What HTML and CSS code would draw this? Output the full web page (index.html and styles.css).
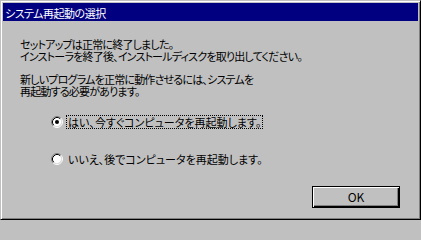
FILE: index.html
```html
<!DOCTYPE html>
<html lang="ja">
<head>
<meta charset="utf-8">
<title>システム再起動の選択</title>
<link rel="stylesheet" href="styles.css">
</head>
<body>
<div class="window">
  <div class="titlebar"><span class="title">システム再起動の選択</span></div>
  <div class="content">
    <p class="msg">セットアップは正常に終了しました。<br>インストーラを終了後、インストールディスクを取り出してください。</p>
    <p class="msg msg-gap">新しいプログラムを正常に動作させるには、システムを<br>再起動する必要があります。</p>
    <div class="options">
      <div class="radio radio-first">
        <svg class="radio-icon" width="12" height="12" viewBox="0 0 12 12">
          <circle cx="6" cy="6" r="4.5" fill="#fff"/>
          <path d="M2.11 9.89 A5.5 5.5 0 0 1 9.89 2.11" fill="none" stroke="#808080" stroke-width="1"/>
          <path d="M9.89 2.11 A5.5 5.5 0 0 1 2.11 9.89" fill="none" stroke="#fff" stroke-width="1"/>
          <path d="M2.82 9.18 A4.5 4.5 0 0 1 9.18 2.82" fill="none" stroke="#000" stroke-width="1"/>
          <path d="M9.18 2.82 A4.5 4.5 0 0 1 2.82 9.18" fill="none" stroke="#dfdfdf" stroke-width="1"/>
          <circle cx="6" cy="6" r="2" fill="#000"/>
        </svg>
        <span class="label focus">はい、今すぐコンピュータを再起動します。</span>
      </div>
      <div class="radio radio-second">
        <svg class="radio-icon" width="12" height="12" viewBox="0 0 12 12">
          <circle cx="6" cy="6" r="4.5" fill="#fff"/>
          <path d="M2.11 9.89 A5.5 5.5 0 0 1 9.89 2.11" fill="none" stroke="#808080" stroke-width="1"/>
          <path d="M9.89 2.11 A5.5 5.5 0 0 1 2.11 9.89" fill="none" stroke="#fff" stroke-width="1"/>
          <path d="M2.82 9.18 A4.5 4.5 0 0 1 9.18 2.82" fill="none" stroke="#000" stroke-width="1"/>
          <path d="M9.18 2.82 A4.5 4.5 0 0 1 2.82 9.18" fill="none" stroke="#dfdfdf" stroke-width="1"/>
        </svg>
        <span class="label">いいえ、後でコンピュータを再起動します。</span>
      </div>
    </div>
    <div class="actions">
      <button class="btn btn-default" type="button">OK</button>
    </div>
  </div>
</div>
</body>
</html>
```

FILE: styles.css
```css
html, body {
  margin: 0;
  padding: 0;
  background: #c0c0c0;
}

body {
  font-family: "Noto Sans CJK JP", "Noto Sans", sans-serif;
  font-size: 11px;
  font-feature-settings: "palt";
  color: #000;
}

.window {
  box-sizing: border-box;
  width: 421px;
  height: 220px;
  display: flex;
  flex-direction: column;
  background: #c0c0c0;
  border-style: solid;
  border-width: 1px;
  border-color: #c0c0c0 #000 #000 #c0c0c0;
  box-shadow: inset 1px 1px #fff, inset -1px -1px #808080;
  padding: 2px;
}

.titlebar {
  height: 18px;
  background: #000080;
  color: #fff;
  display: flex;
  align-items: center;
  padding-left: 2px;
  padding-top: 1px;
  box-sizing: border-box;
}

.title {
  line-height: 12px;
  letter-spacing: -0.5px;
}

.content {
  flex: 1;
  display: flex;
  flex-direction: column;
  padding: 17px 18px 9px 17px;
}

.msg {
  margin: 0;
  line-height: 12px;
  white-space: nowrap;
  letter-spacing: -0.8px;
}

.msg-gap {
  margin-top: 11px;
}

.options {
  display: flex;
  flex-direction: column;
  margin-left: 31px;
  margin-top: 18px;
}

.radio {
  display: flex;
  align-items: center;
  gap: 3px;
  height: 14px;
}

.radio-second {
  margin-top: 23px;
}

.radio-icon {
  display: block;
  flex: none;
}

.label {
  border: 1px solid transparent;
  padding: 0 1px;
  line-height: 12px;
  white-space: nowrap;
}

.label.focus {
  border: 1px dotted #000;
}

.actions {
  margin-top: auto;
  display: flex;
  justify-content: flex-end;
}

.btn {
  width: 88px;
  height: 22px;
  margin: 0;
  padding: 0;
  font-family: "Noto Sans CJK JP", "Noto Sans", sans-serif;
  font-size: 12px;
  color: #000;
  background: #c0c0c0;
  border: 1px solid #000;
  box-shadow: inset 1px 1px #fff, inset -1px -1px #000, inset -2px -2px #808080;
  line-height: 12px;
}
```
